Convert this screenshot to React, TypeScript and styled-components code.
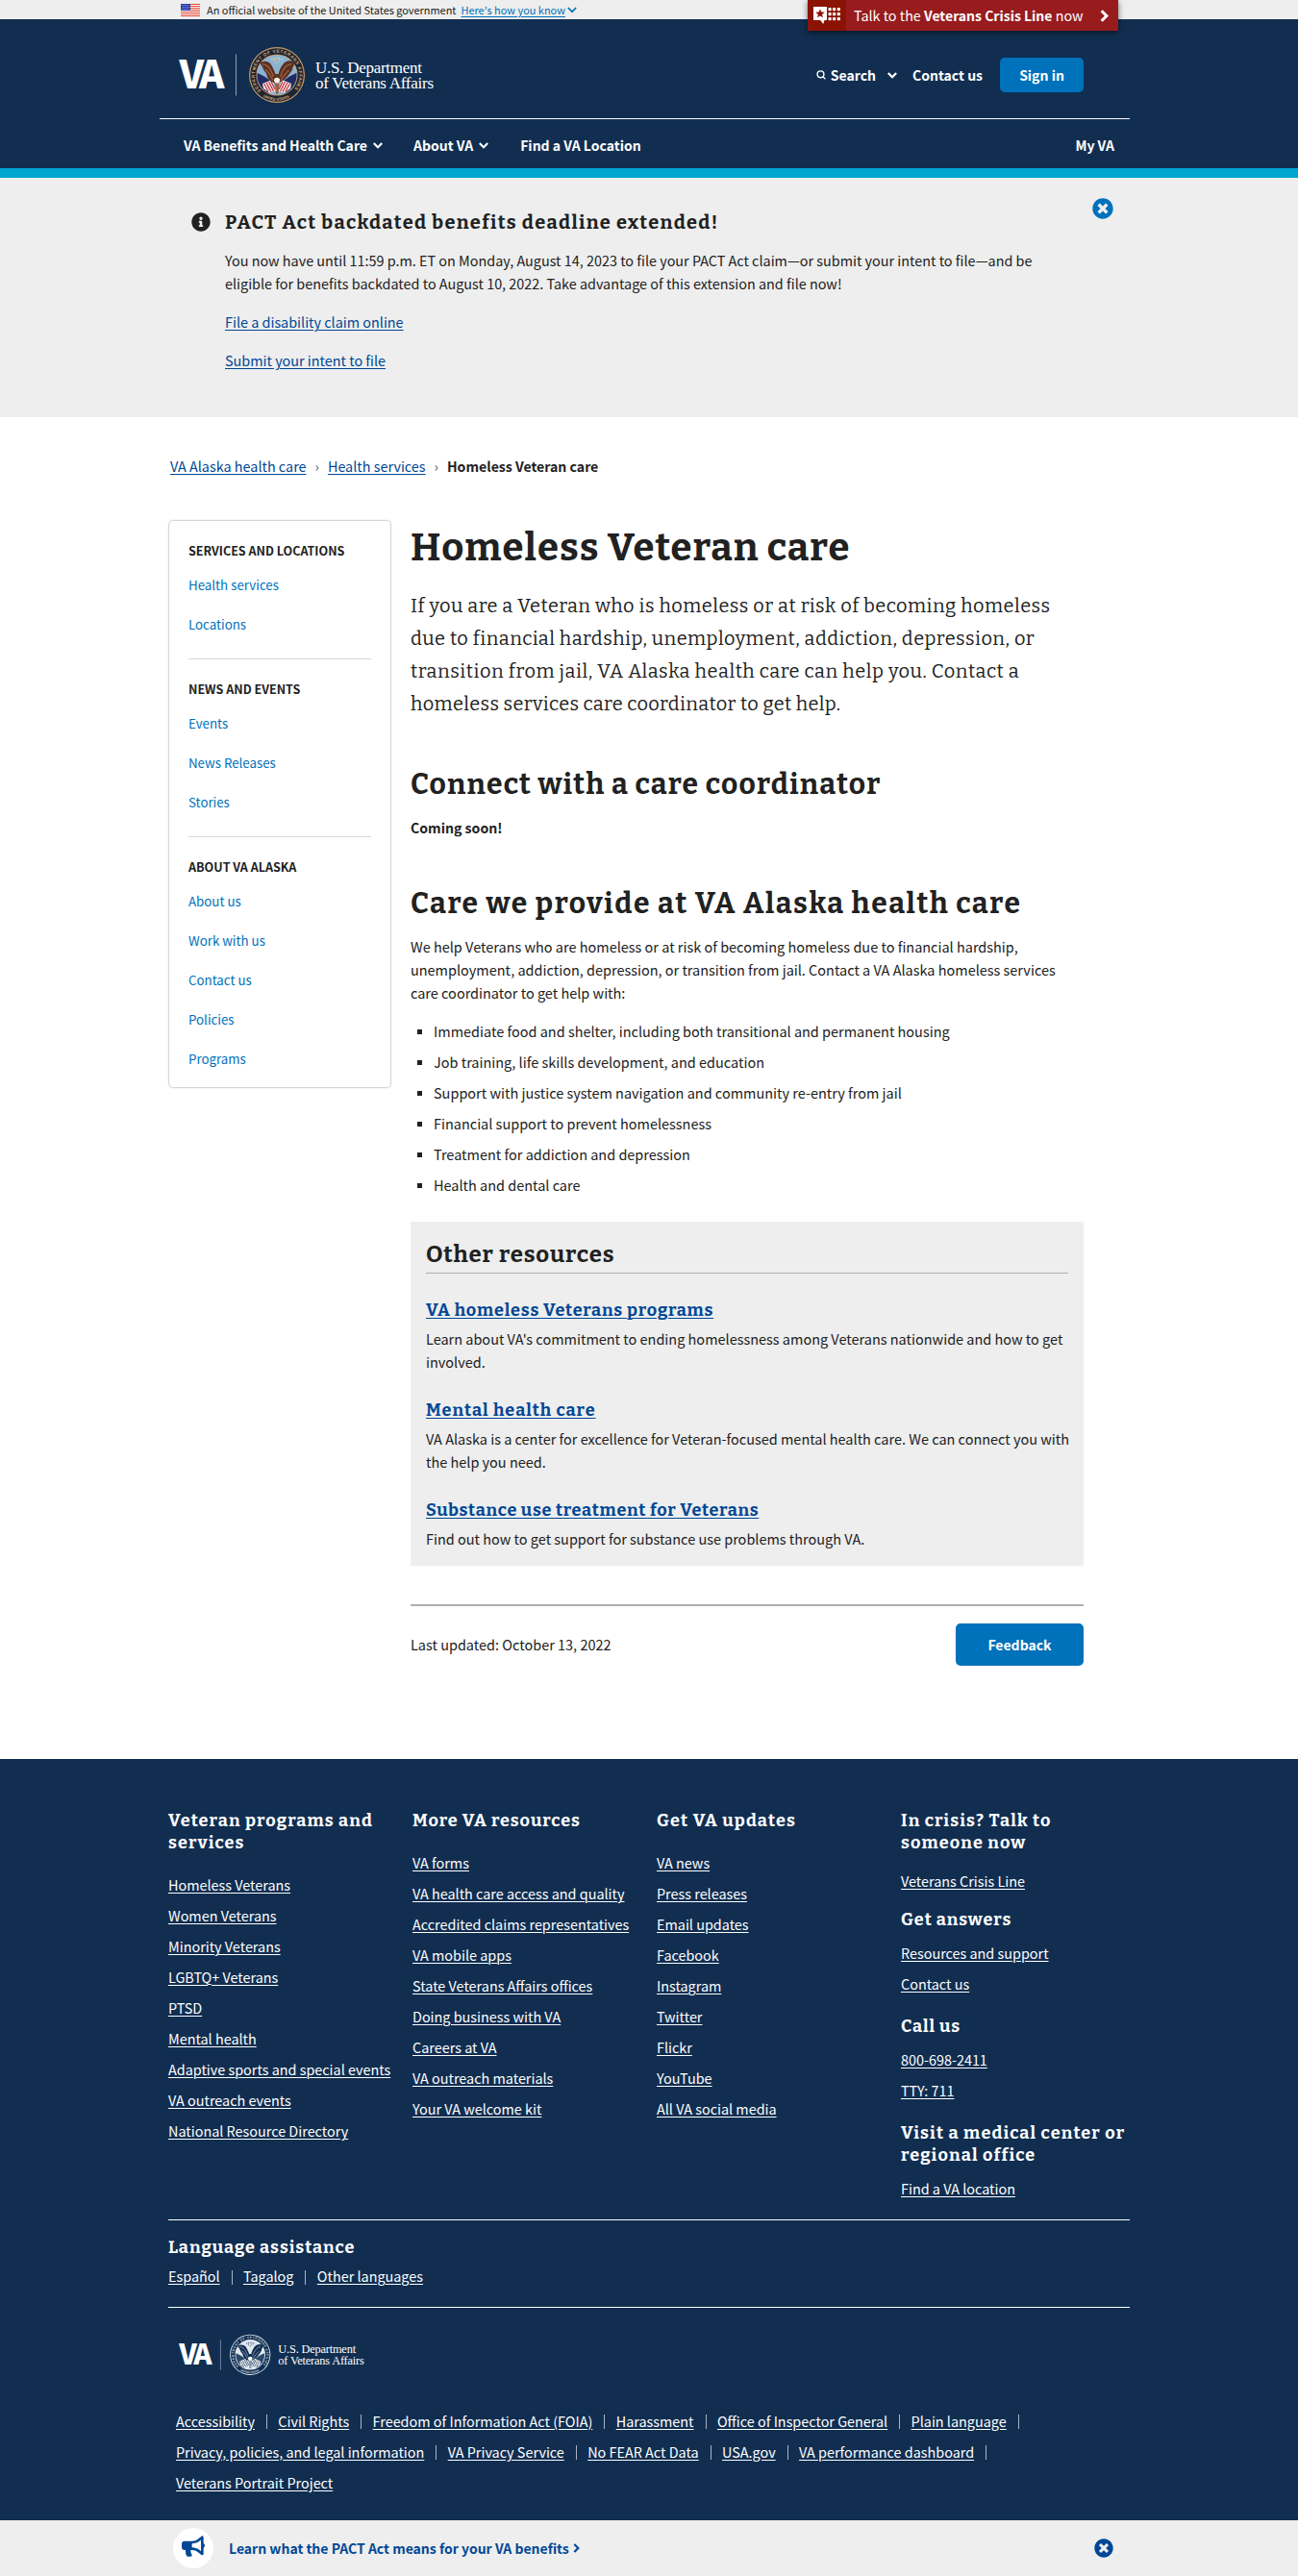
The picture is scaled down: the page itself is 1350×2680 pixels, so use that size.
import React from "react";
import styled, { createGlobalStyle } from "styled-components";
import { FaBullhorn, FaInfoCircle, FaTimesCircle } from "react-icons/fa";

const sans = `"Noto Sans CJK SC", "Noto Sans", sans-serif`;
const slab = `Bitter, "DejaVu Serif Condensed", "DejaVu Serif", serif`;

const navy = "#112e51";
const blue = "#0071bb";
const linkBlue = "#004795";
const ink = "#212121";
const pale = "#eeeeee";

const GlobalStyle = createGlobalStyle`
  *, *::before, *::after { box-sizing: border-box; }
  body {
    margin: 0;
    background: #fff;
    color: ${ink};
    font: 400 14.4px/24px ${sans};
  }
  h1, h2, h3, h4, p, ul { margin: 0; padding: 0; }
  ul { list-style: none; }
  a { text-decoration-thickness: 1px; text-underline-offset: 2px; }
  svg { display: block; flex: none; overflow: visible; }
`;

const Page = styled.div`
  width: 1350px;
  height: 2680px;
  display: flex;
  flex-direction: column;
  overflow: hidden;
  white-space: nowrap;
`;

/* ---------- government banner ---------- */

const GovBanner = styled.div`
  height: 20px;
  padding-left: 188px;
  background: ${pale};
  color: ${ink};
  display: flex;
  align-items: center;
  font-size: 10.95px;
  line-height: 19px;
`;

const BannerText = styled.span`
  margin-left: 7px;
`;

const BannerLink = styled.a`
  margin-left: 5px;
  color: ${blue};
  display: flex;
  align-items: center;
  gap: 2px;
`;

const Underlined = styled.span`
  text-decoration: underline;
  text-decoration-thickness: 1px;
  text-underline-offset: 2px;
`;

/* ---------- header ---------- */

const Header = styled.header`
  position: relative;
  height: 165px;
  background: ${navy};
  border-bottom: 10px solid #00a6d2;
  color: #fff;
`;

const HeaderInner = styled.div`
  width: 1009px;
  margin-left: 166px;
`;

const HeaderTop = styled.div`
  height: 104px;
  padding: 13px 48px 0 20px;
  border-bottom: 1px solid #fff;
  display: flex;
  align-items: center;
  justify-content: space-between;
  font-size: 14px;
  font-weight: 700;
`;

const Tools = styled.div`
  display: flex;
  align-items: center;
`;

const SearchButton = styled.span`
  display: flex;
  align-items: center;
  gap: 5px;
  margin-right: 16px;
`;

const SearchLabel = styled.span`
  margin-right: 7px;
`;

const Button = styled.button<{ $w: number; $h: number }>`
  width: ${(p) => p.$w}px;
  height: ${(p) => p.$h}px;
  padding: 0 0 1px;
  border: 0;
  border-radius: 5px;
  background: ${blue};
  color: #fff;
  font: 700 14px/24px ${sans};
`;

const ContactLink = styled.span`
  margin-right: 18px;
`;

const MainNav = styled.nav`
  height: 51px;
  padding: 3px 16px 0 25px;
  display: flex;
  align-items: center;
  font-size: 14.02px;
  font-weight: 700;
`;

const NavItem = styled.span<{ $gap?: number }>`
  display: flex;
  align-items: center;
  gap: 6px;
  margin-right: ${(p) => p.$gap ?? 0}px;
  &:last-child { margin-left: auto; }
`;

const CrisisLine = styled.a`
  position: absolute;
  top: -20px;
  left: 840px;
  width: 323px;
  height: 32px;
  display: flex;
  align-items: center;
  background: #981b1e;
  box-shadow: 0 2px 6px rgba(0, 0, 0, 0.55);
  font-size: 14.34px;
`;

const CrisisIcon = styled.span`
  width: 40px;
  height: 32px;
  margin-right: 8px;
  background: #8b1303;
  display: flex;
  align-items: center;
  justify-content: center;
`;

const CrisisText = styled.span`
  flex: 1;
  padding-bottom: 1px;
  b { font-size: 14px; }
`;

const CrisisArrow = styled.span`
  margin-right: 10px;
`;

/* ---------- alert ---------- */

const Alert = styled.section`
  height: 249px;
  padding: 33px 192px 0 199px;
  background: ${pale};
  display: flex;
  align-items: flex-start;
`;

const AlertIcon = styled.span`
  width: 35px;
  padding-top: 3px;
`;

const AlertBody = styled.div`
  flex: 1;
  display: flex;
  flex-direction: column;
  align-items: flex-start;
  gap: 16px;
`;

const AlertTitle = styled.h2`
  margin-bottom: -1px;
  font: 700 20px/26px ${slab};
  letter-spacing: 1.31px;
`;

const TextLink = styled.a`
  color: ${linkBlue};
  text-decoration: underline;
`;

const CloseButton = styled.span<{ $color: string }>`
  color: ${(p) => p.$color};
  line-height: 0;
`;

const AlertClose = styled(CloseButton)`
  margin-top: -12px;
`;

/* ---------- breadcrumb ---------- */

const Breadcrumb = styled.nav`
  height: 107px;
  padding: 39px 0 0 177px;
  display: flex;
  gap: 9px;
  b { font-size: 14.1px; }
`;

const Crumb = styled.span`
  color: #5b616b;
`;

/* ---------- body ---------- */

const Main = styled.main`
  height: 1289px;
  padding-left: 175px;
  display: flex;
  align-items: flex-start;
  gap: 20px;
`;

const Sidebar = styled.aside`
  width: 232px;
  height: 591px;
  padding: 0 20px;
  border: 1px solid #d6d7d9;
  border-radius: 5px;
  box-shadow: 0 0 2px rgba(0, 0, 0, 0.12);
`;

const SideSection = styled.section`
  padding: 21px 0 15px;
  & + & { border-top: 1px solid #d6d7d9; }
`;

const SideTitle = styled.h3`
  margin-bottom: 5px;
  font-size: 12.56px;
  line-height: 20px;
`;

const SideLink = styled.li`
  color: ${blue};
  font-size: 13.3px;
  line-height: 41px;
`;

const Content = styled.article`
  width: 700px;
  padding-top: 3px;
  font-size: 14.47px;
`;

const PageTitle = styled.h1`
  font: 700 40px/52px ${slab};
  letter-spacing: 1.04px;
`;

const Intro = styled.p`
  margin: 17px 0 47px;
`;

const IntroLine = styled.span<{ $track: number }>`
  display: block;
  font: 400 20px/34px ${slab};
  letter-spacing: ${(p) => p.$track}px;
`;

const SectionTitle = styled.h2<{ $track: number }>`
  margin-bottom: 13px;
  font: 700 30px/40px ${slab};
  letter-spacing: ${(p) => p.$track}px;
`;

const Strong = styled.p`
  margin-bottom: 47px;
  font-size: 14.1px;
  font-weight: 700;
`;

const Bullets = styled.ul`
  margin: 16px 0 26px;
  display: flex;
  flex-direction: column;
  gap: 8px;
`;

const Bullet = styled.li`
  padding-left: 7px;
  display: flex;
  align-items: center;
  gap: 12px;
  &::before {
    content: "";
    width: 5px;
    height: 5px;
    background: ${ink};
  }
`;

const Resources = styled.section`
  height: 358px;
  padding: 18px 16px 0;
  background: ${pale};
`;

const ResourcesTitle = styled.h3`
  height: 36px;
  border-bottom: 1px solid #aeb0b5;
  font: 700 24px/32px ${slab};
  letter-spacing: 0.85px;
`;

const Resource = styled.div`
  margin-top: 26px;
`;

const ResourceLink = styled.a<{ $track: number }>`
  display: table;
  margin-bottom: 6px;
  color: ${linkBlue};
  font: 700 18px/24px ${slab};
  letter-spacing: ${(p) => p.$track}px;
  text-decoration: underline;
  text-decoration-thickness: 1px;
`;

const Updated = styled.div`
  margin-top: 40px;
  padding-top: 18px;
  border-top: 2px solid #aeb0b5;
  display: flex;
  align-items: center;
  justify-content: space-between;
`;

/* ---------- footer ---------- */

const Footer = styled.footer`
  height: 792px;
  padding: 53px 0 0 175px;
  background: ${navy};
  color: #fff;
`;

const FooterColumns = styled.div`
  width: 1000px;
  height: 426px;
  display: grid;
  grid-template-columns: repeat(4, 254px);
`;

const FooterTitle = styled.h4<{ $track?: number; $gap?: number; $above?: number }>`
  margin: ${(p) => p.$above ?? 0}px 0 ${(p) => p.$gap ?? 16}px;
  font: 700 18px/23px ${slab};
  letter-spacing: ${(p) => p.$track ?? 1.12}px;
`;

const FooterLink = styled.li`
  line-height: 32px;
  text-decoration: underline;
  text-decoration-thickness: 1px;
  text-underline-offset: 2px;
`;

const LanguageBlock = styled.section`
  width: 1000px;
  height: 92px;
  padding-top: 17px;
  border: solid #fff;
  border-width: 1px 0;
`;

const InlineLinks = styled.ul<{ $lh: number }>`
  display: flex;
  flex-wrap: wrap;
  column-gap: 11.4px;
  line-height: ${(p) => p.$lh}px;
`;

const InlineLink = styled.li<{ $bar: boolean }>`
  display: flex;
  align-items: center;
  gap: 12px;
  &::after {
    content: "";
    display: ${(p) => (p.$bar ? "block" : "none")};
    width: 1px;
    height: 15px;
    margin-top: 2px;
    background: #a9b5c5;
  }
`;

const InlineAnchor = styled.a`
  text-decoration: underline;
`;

const FooterLogo = styled.div`
  padding: 27px 0 31px 11px;
`;

const LegalLinks = styled.div`
  width: 993px;
  padding-left: 8px;
`;

/* ---------- bottom promo ---------- */

const Promo = styled.div`
  height: 58px;
  padding: 0 192px 0 180px;
  background: ${pale};
  color: ${linkBlue};
  display: flex;
  align-items: center;
  font-size: 14px;
  font-weight: 700;
`;

const PromoIcon = styled.span`
  width: 42px;
  height: 42px;
  margin-right: 16px;
  padding-bottom: 4px;
  border-radius: 50%;
  background: #fff;
  display: flex;
  align-items: center;
  justify-content: center;
`;

const PromoText = styled.span`
  margin-right: 4px;
`;

const PromoClose = styled(CloseButton)`
  margin-left: auto;
`;

/* ---------- drawings ---------- */

const Chevron = ({ w = 10, sw = 2.2 }: { w?: number; sw?: number }) => (
  <svg width={w} height={w * 0.7} viewBox="0 0 10 7" fill="none" stroke="currentColor" strokeWidth={sw}>
    <path d="M0.8 1 5 5.2 9.200 1" />
  </svg>
);

const ChevronRight = ({ w, h, sw }: { w: number; h: number; sw: number }) => (
  <svg width={w} height={h} viewBox="0 0 8 12" fill="none" stroke="currentColor" strokeWidth={sw}>
    <path d="M1.4 1.2 6.2 6 1.4 10.8" />
  </svg>
);

const Flag = () => (
  <svg width="20" height="13" viewBox="0 0 20 13">
    <rect width="20" height="13" fill="#fff" />
    {[0, 2, 4, 6, 8, 10, 12].map((y) => (
      <rect key={y} y={y} width="20" height="1" fill="#e0452f" />
    ))}
    <rect width="10" height="7" fill="#2b3fae" />
    {[1, 3, 5].map((y) =>
      [1, 3, 5, 7].map((x) => <rect key={`${x}-${y}`} x={x + (y === 3 ? 1 : 0)} y={y} width="0.8" height="0.8" fill="#cdd3f3" />)
    )}
  </svg>
);

const SearchIcon = () => (
  <svg width="10" height="10" viewBox="0 0 10 10" fill="none" stroke="currentColor" strokeWidth="1.4">
    <circle cx="4.5" cy="4.3" r="3.4" />
    <path d="M6.9 6.8 9.4 9.2" />
  </svg>
);

const CrisisMark = () => (
  <svg width="29" height="20" viewBox="0 0 29 20" fill="#fff">
    <path d="M0 1h14v14h-2.4l-1.4 4-3-4H0z" />
    <path d="m7 3.3 1.3 3.2 3.4.2-2.6 2.2.8 3.3L7 10.4l-2.9 1.8.8-3.3-2.6-2.2 3.4-.2z" fill="#8b1303" />
    {[2, 7, 12].map((y) => [15.5, 20, 24.7].map((x) => <rect key={`${x}-${y}`} x={x} y={y} width="3.2" height="3.2" rx="0.8" />))}
  </svg>
);

type SealColors = {
  rim: string;
  ring: string;
  disc: string;
  wing: string;
  feather: string;
  head: string;
  stripe: string;
  canton: string;
  letters: string;
  stars: string;
};

const fullColor: SealColors = {
  rim: "#c89b68",
  ring: "#20242f",
  disc: "#8db3d3",
  wing: "#5b3021",
  feather: "#99603f",
  head: "#f6efe2",
  stripe: "#c5324a",
  canton: "#1f2c63",
  letters: "#cda877",
  stars: "#e8d48a",
};

const oneColor: SealColors = {
  rim: "#dfe6ef",
  ring: navy,
  disc: "#dfe6ef",
  wing: navy,
  feather: "#8296b2",
  head: "#ffffff",
  stripe: "#43597a",
  canton: "#2b476c",
  letters: "#c3cedd",
  stars: navy,
};

const Seal = ({ c, id }: { c: SealColors; id: string }) => (
  <g>
    <circle r="29" fill={c.rim} />
    <circle r="27.8" fill={c.ring} />
    <circle r="21.6" fill={c.rim} />
    <circle r="20.8" fill={c.disc} />
    <path id={id} d="M-16.4 16.4A23.2 23.2 0 1 1 16.4 16.4" fill="none" />
    <text fontFamily="Liberation Sans, sans-serif" fontSize="4.6" fontWeight="700" fill={c.letters}>
      <textPath href={`#${id}`} textLength="106">DEPARTMENT OF VETERANS AFFAIRS</textPath>
    </text>
    <path id={`${id}-b`} d="M-14.5 22.4A26.7 26.7 0 0 0 14.5 22.4" fill="none" />
    <text fontFamily="Liberation Sans, sans-serif" fontSize="4" fontWeight="700" fill={c.letters}>
      <textPath href={`#${id}-b`} textLength="29">UNITED STATES</textPath>
    </text>
    <path d="M-20.500-2C-15 0-10 3-6 7L-8 19A20.600 20.600 0 0 1-20.500-2Z" fill={c.canton} />
    <path d="M20.500-2C15 0 10 3 6 7L8 19A20.600 20.600 0 0 0 20.500-2Z" fill={c.canton} />
    <path d="M-15 9-5 5-1 17-8 18.500-14 14Z" fill={c.head} />
    <path d="M15 9 5 5 1 17 8 18.500 14 14Z" fill={c.head} />
    <path d="M-13.500 9-9 17M-11 8-6 17.500M-8.500 7-3.500 17M-6 7-2 15M13.500 9 9 17M11 8 6 17.500M8.500 7 3.500 17M6 7 2 15" stroke={c.stripe} strokeWidth="1.3" />
    <path d="M-18-12.500C-13-15.500-9-14-7-12-4.500-9-3-5-1.500-1L1.500-1C3-6 5-10.500 8-13 11-15 15-15.500 18.500-13.500 18.500-10 16-8.500 16-5.500 14.500-3 12.500 0 10 2.500 8 5 5 7 2.500 8L0 12-3 8C-7 7-9.500 4.500-11-1.500-13-4-14.500-6-15-8.500Z" fill={c.wing} />
    <path d="M-15-11.500C-10-11-6-6-3.500 2M-12-6C-9-3-6 1-4 5.500M15-11.500C10-11 6-6 3.500 2M12.500-5C9.500-2 6 2 4 6" stroke={c.feather} strokeWidth="1.300" fill="none" />
    <path d="M-3 6C-3.500 2.500 1.500 1.500 3 4.500 3.600 6.500 2 8.500.500 10-1 9-2.500 8-3 6Z" fill={c.head} />
    <path d="M-2 9.500-1 19.500 1.500 19.500 2.500 9.500 0 8Z" fill={c.feather} />
    <g fill={c.stars}>
      {[-5, -2.5, 0, 2.5, 5].map((x) => (
        <circle key={x} cx={x} cy={-17.5 + Math.abs(x) * 0.25} r="0.8" />
      ))}
      <circle cx="-2.200" cy="-14.500" r="0.7" />
      <circle cx="2.200" cy="-14.500" r="0.7" />
      <circle cx="0" cy="-12.500" r="0.7" />
    </g>
  </g>
);

const Logo = ({ width, colors, id }: { width: number; colors: SealColors; id: string }) => (
  <svg width={width} height={(width * 60) / 268} viewBox="0 0 268 60">
    <text x="0.5" y="43.500" textLength="47" fontFamily={sans} fontSize="40" fontWeight="900" fill="#fff">VA</text>
    <rect x="59" y="8.500" width="1" height="43" fill="#8d9fb8" />
    <g transform="translate(102 30)">
      <Seal c={colors} id={id} />
    </g>
    <g fontFamily='"Liberation Serif", serif' fontSize="17" fontWeight="400" fill="#fff">
      <text x="142" y="27.500" textLength="111">U.S. Department</text>
      <text x="142" y="44" textLength="123">of Veterans Affairs</text>
    </g>
  </svg>
);

/* ---------- data ---------- */

const sideNav = [
  { title: "SERVICES AND LOCATIONS", links: ["Health services", "Locations"] },
  { title: "NEWS AND EVENTS", links: ["Events", "News Releases", "Stories"] },
  { title: "ABOUT VA ALASKA", links: ["About us", "Work with us", "Contact us", "Policies", "Programs"] },
];

const services = [
  "Immediate food and shelter, including both transitional and permanent housing",
  "Job training, life skills development, and education",
  "Support with justice system navigation and community re-entry from jail",
  "Financial support to prevent homelessness",
  "Treatment for addiction and depression",
  "Health and dental care",
];

const programLinks = [
  "Homeless Veterans", "Women Veterans", "Minority Veterans", "LGBTQ+ Veterans", "PTSD", "Mental health",
  "Adaptive sports and special events", "VA outreach events", "National Resource Directory",
];

const resourceLinks = [
  "VA forms", "VA health care access and quality", "Accredited claims representatives", "VA mobile apps",
  "State Veterans Affairs offices", "Doing business with VA", "Careers at VA", "VA outreach materials", "Your VA welcome kit",
];

const updateLinks = [
  "VA news", "Press releases", "Email updates", "Facebook", "Instagram", "Twitter", "Flickr", "YouTube", "All VA social media",
];

const legal = [
  "Accessibility", "Civil Rights", "Freedom of Information Act (FOIA)", "Harassment", "Office of Inspector General",
  "Plain language", "Privacy, policies, and legal information", "VA Privacy Service", "No FEAR Act Data", "USA.gov",
  "VA performance dashboard", "Veterans Portrait Project",
];

const LinkList = ({ items }: { items: string[] }) => (
  <ul>
    {items.map((t) => (
      <FooterLink key={t}>{t}</FooterLink>
    ))}
  </ul>
);

const BarList = ({ items, lh }: { items: string[]; lh: number }) => (
  <InlineLinks $lh={lh}>
    {items.map((t, i) => (
      <InlineLink key={t} $bar={i < items.length - 1}>
        <InlineAnchor>{t}</InlineAnchor>
      </InlineLink>
    ))}
  </InlineLinks>
);

export default function App() {
  return (
    <>
      <GlobalStyle />
      <Page>
        <GovBanner>
          <Flag />
          <BannerText>An official website of the United States government</BannerText>
          <BannerLink>
            <Underlined>Here's how you know</Underlined>
            <Chevron w={10} sw={1.7} />
          </BannerLink>
        </GovBanner>

        <Header>
          <CrisisLine>
            <CrisisIcon><CrisisMark /></CrisisIcon>
            <CrisisText>Talk to the <b>Veterans Crisis Line</b> now</CrisisText>
            <CrisisArrow><ChevronRight w={9} h={13} sw={2.8} /></CrisisArrow>
          </CrisisLine>
          <HeaderInner>
            <HeaderTop>
              <Logo width={268} colors={fullColor} id="seal-top" />
              <Tools>
                <SearchButton>
                  <SearchIcon />
                  <SearchLabel>Search</SearchLabel>
                  <Chevron />
                </SearchButton>
                <ContactLink>Contact us</ContactLink>
                <Button $w={87} $h={36}>Sign in</Button>
              </Tools>
            </HeaderTop>
            <MainNav>
              <NavItem $gap={32}>VA Benefits and Health Care <Chevron /></NavItem>
              <NavItem $gap={33}>About VA <Chevron /></NavItem>
              <NavItem>Find a VA Location</NavItem>
              <NavItem>My VA</NavItem>
            </MainNav>
          </HeaderInner>
        </Header>

        <Alert>
          <AlertIcon><FaInfoCircle size={20} /></AlertIcon>
          <AlertBody>
            <AlertTitle>PACT Act backdated benefits deadline extended!</AlertTitle>
            <p>
              You now have until 11:59 p.m. ET on Monday, August 14, 2023 to file your PACT Act claim—or submit your intent to file—and be<br />
              eligible for benefits backdated to August 10, 2022. Take advantage of this extension and file now!
            </p>
            <TextLink>File a disability claim online</TextLink>
            <TextLink>Submit your intent to file</TextLink>
          </AlertBody>
          <AlertClose $color={blue}><FaTimesCircle size={22} /></AlertClose>
        </Alert>

        <Breadcrumb>
          <TextLink>VA Alaska health care</TextLink>
          <Crumb>›</Crumb>
          <TextLink>Health services</TextLink>
          <Crumb>›</Crumb>
          <b>Homeless Veteran care</b>
        </Breadcrumb>

        <Main>
          <Sidebar>
            {sideNav.map((s) => (
              <SideSection key={s.title}>
                <SideTitle>{s.title}</SideTitle>
                <ul>
                  {s.links.map((l) => (
                    <SideLink key={l}>{l}</SideLink>
                  ))}
                </ul>
              </SideSection>
            ))}
          </Sidebar>

          <Content>
            <PageTitle>Homeless Veteran care</PageTitle>
            <Intro>
              <IntroLine $track={0.46}>If you are a Veteran who is homeless or at risk of becoming homeless</IntroLine>
              <IntroLine $track={0.43}>due to financial hardship, unemployment, addiction, depression, or</IntroLine>
              <IntroLine $track={0.53}>transition from jail, VA Alaska health care can help you. Contact a</IntroLine>
              <IntroLine $track={0.31}>homeless services care coordinator to get help.</IntroLine>
            </Intro>

            <SectionTitle $track={1.18}>Connect with a care coordinator</SectionTitle>
            <Strong>Coming soon!</Strong>

            <SectionTitle $track={1.58}>Care we provide at VA Alaska health care</SectionTitle>
            <p>
              We help Veterans who are homeless or at risk of becoming homeless due to financial hardship,<br />
              unemployment, addiction, depression, or transition from jail. Contact a VA Alaska homeless services<br />
              care coordinator to get help with:
            </p>
            <Bullets>
              {services.map((s) => (
                <Bullet key={s}>{s}</Bullet>
              ))}
            </Bullets>

            <Resources>
              <ResourcesTitle>Other resources</ResourcesTitle>
              <Resource>
                <ResourceLink $track={0.79}>VA homeless Veterans programs</ResourceLink>
                <p>Learn about VA's commitment to ending homelessness among Veterans nationwide and how to get<br />involved.</p>
              </Resource>
              <Resource>
                <ResourceLink $track={1}>Mental health care</ResourceLink>
                <p>VA Alaska is a center for excellence for Veteran-focused mental health care. We can connect you with<br />the help you need.</p>
              </Resource>
              <Resource>
                <ResourceLink $track={0.67}>Substance use treatment for Veterans</ResourceLink>
                <p>Find out how to get support for substance use problems through VA.</p>
              </Resource>
            </Resources>

            <Updated>
              <span>Last updated: October 13, 2022</span>
              <Button $w={133} $h={44}>Feedback</Button>
            </Updated>
          </Content>
        </Main>

        <Footer>
          <FooterColumns>
            <div>
              <FooterTitle>Veteran programs and<br />services</FooterTitle>
              <LinkList items={programLinks} />
            </div>
            <div>
              <FooterTitle $track={0.92}>More VA resources</FooterTitle>
              <LinkList items={resourceLinks} />
            </div>
            <div>
              <FooterTitle>Get VA updates</FooterTitle>
              <LinkList items={updateLinks} />
            </div>
            <div>
              <FooterTitle $gap={12}>In crisis? Talk to<br />someone now</FooterTitle>
              <LinkList items={["Veterans Crisis Line"]} />
              <FooterTitle $above={13} $gap={7} $track={0.9}>Get answers</FooterTitle>
              <LinkList items={["Resources and support", "Contact us"]} />
              <FooterTitle $above={17} $gap={7} $track={0.9}>Call us</FooterTitle>
              <LinkList items={["800-698-2411", "TTY: 711"]} />
              <FooterTitle $above={17} $gap={7}>Visit a medical center or<br />regional office</FooterTitle>
              <LinkList items={["Find a VA location"]} />
            </div>
          </FooterColumns>

          <LanguageBlock>
            <FooterTitle $gap={6} $track={0.94}>Language assistance</FooterTitle>
            <BarList lh={24} items={["Español", "Tagalog", "Other languages"]} />
          </LanguageBlock>

          <FooterLogo>
            <Logo width={195} colors={oneColor} id="seal-foot" />
          </FooterLogo>

          <LegalLinks>
            <BarList lh={32} items={legal} />
          </LegalLinks>
        </Footer>

        <Promo>
          <PromoIcon><FaBullhorn size={24} /></PromoIcon>
          <PromoText>Learn what the PACT Act means for your VA benefits</PromoText>
          <ChevronRight w={7} h={10} sw={2.6} />
          <PromoClose $color={linkBlue}><FaTimesCircle size={20} /></PromoClose>
        </Promo>
      </Page>
    </>
  );
}
